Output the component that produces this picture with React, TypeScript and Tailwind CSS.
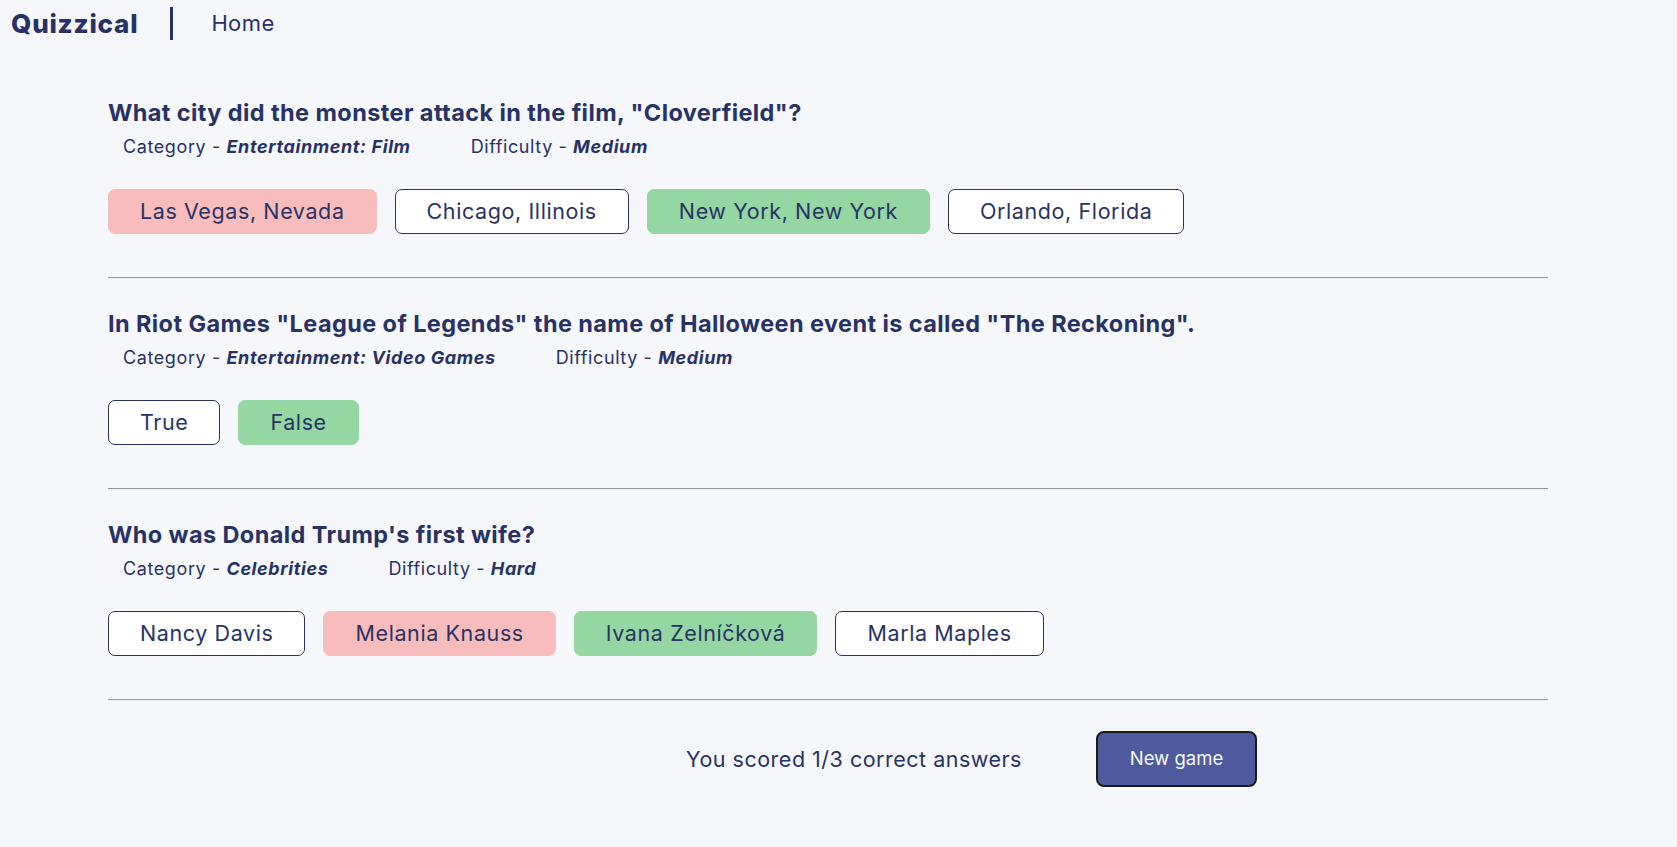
import React from "react";

type Q = {
  question: string;
  category: string;
  difficulty: string;
  answers: { text: string; state: "wrong" | "correct" | "none" }[];
};

const questions: Q[] = [
  {
    question: 'What city did the monster attack in the film, "Cloverfield"?',
    category: "Entertainment: Film",
    difficulty: "Medium",
    answers: [
      { text: "Las Vegas, Nevada", state: "wrong" },
      { text: "Chicago, Illinois", state: "none" },
      { text: "New York, New York", state: "correct" },
      { text: "Orlando, Florida", state: "none" },
    ],
  },
  {
    question:
      'In Riot Games "League of Legends" the name of Halloween event is called "The Reckoning".',
    category: "Entertainment: Video Games",
    difficulty: "Medium",
    answers: [
      { text: "True", state: "none" },
      { text: "False", state: "correct" },
    ],
  },
  {
    question: "Who was Donald Trump's first wife?",
    category: "Celebrities",
    difficulty: "Hard",
    answers: [
      { text: "Nancy Davis", state: "none" },
      { text: "Melania Knauss", state: "wrong" },
      { text: "Ivana Zelníčková", state: "correct" },
      { text: "Marla Maples", state: "none" },
    ],
  },
];

function Answer({ text, state }: { text: string; state: string }) {
  const look =
    state === "wrong"
      ? "bg-[#f8bcbc] border-[#f8bcbc]"
      : state === "correct"
      ? "bg-[#94d7a2] border-[#94d7a2]"
      : "bg-white border-[#293264]";
  return (
    <button
      className={`h-[45px] px-[31px] rounded-[7px] border text-[21.5px] tracking-[0.6px] text-[#293264] ${look}`}
    >
      {text}
    </button>
  );
}

export default function App() {
  return (
    <div className="min-h-[847px] bg-[#f5f7fb] text-[#293264] font-['Inter',sans-serif]">
      <header className="flex items-center h-[47px] pl-[11px]">
        <span className="text-[26px] font-extrabold tracking-[0.8px]">Quizzical</span>
        <div className="w-[3px] h-[33px] bg-[#293264] ml-[32px]" />
        <span className="ml-[38px] text-[22px] tracking-[0.4px]">Home</span>
      </header>

      <main className="pl-[108px] pt-[51px]">
        <div className="w-[1440px]">
          {questions.map((q) => (
            <section key={q.question}>
              <h2 className="text-[23.5px] font-bold leading-[30px] tracking-[0.4px]">{q.question}</h2>
              <div className="flex gap-[60px] pl-[15px] mt-[8px] text-[18px] leading-[22px] tracking-[0.6px]">
                <span>
                  Category - <b className="italic font-bold">{q.category}</b>
                </span>
                <span>
                  Difficulty - <b className="italic font-bold">{q.difficulty}</b>
                </span>
              </div>
              <div className="flex gap-[18px] mt-[31px]">
                {q.answers.map((a) => (
                  <Answer key={a.text} text={a.text} state={a.state} />
                ))}
              </div>
              <hr className="mt-[43px] mb-[30px] border-t border-t-[#9a9a9a] border-b border-b-[#eeeeee]" />
            </section>
          ))}

          <div className="flex items-center pl-[578px]">
            <span className="text-[21.5px] tracking-[0.5px]">You scored 1/3 correct answers</span>
            <button className="ml-[74px] w-[161px] h-[56px] rounded-[8px] bg-[#4d5b9e] border-2 border-[#1a1a1a] text-[#f5f7fb] text-[18.5px]">
              New game
            </button>
          </div>
        </div>
      </main>
    </div>
  );
}
